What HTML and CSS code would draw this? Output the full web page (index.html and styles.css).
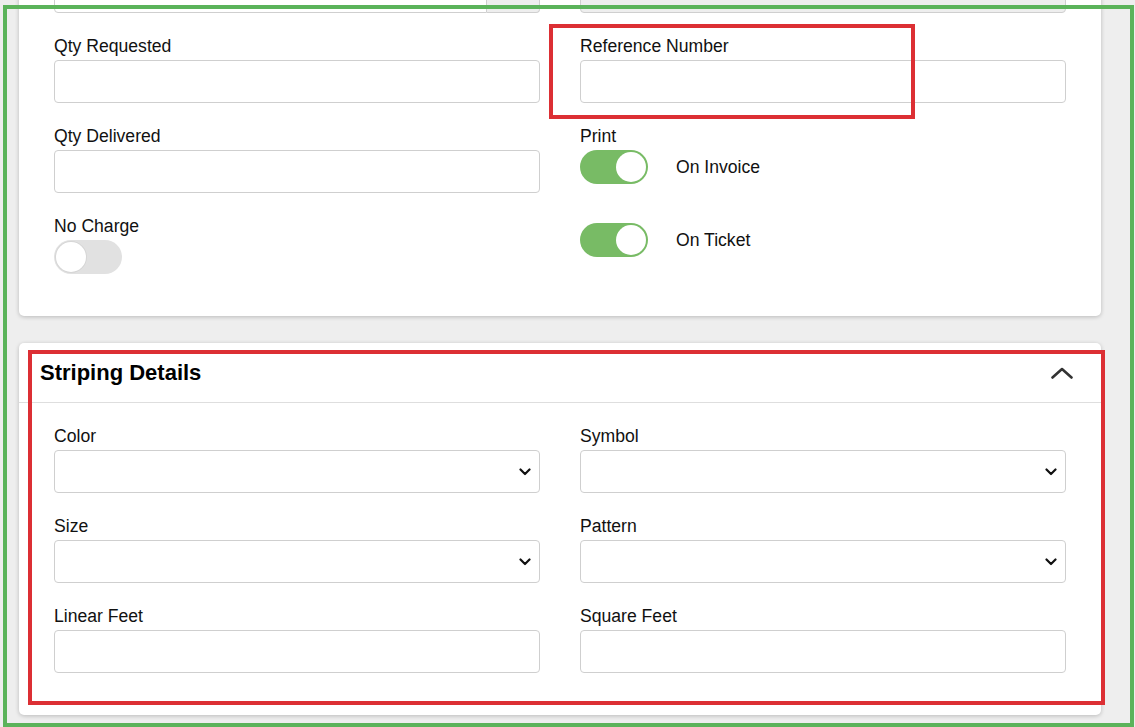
FILE: index.html
```html
<!doctype html>
<html lang="en">
<head>

<meta charset="utf-8">
<meta name="viewport" content="width=device-width, initial-scale=1">

<title>Job Line Details</title>

<link rel="stylesheet" href="styles.css">

</head>
<body>

<div class="page">
	<section class="card card--clipped">
		<div class="form-cols">
			<div class="col">
				<div class="field">
					<div class="input-group">
						<input type="text" class="input">
						<span class="addon"></span>
					</div>
				</div>
				<div class="field">
					<label for="qty-requested">Qty Requested</label>
					<input type="number" class="input" id="qty-requested">
				</div>
				<div class="field">
					<label for="qty-delivered">Qty Delivered</label>
					<input type="number" class="input" id="qty-delivered">
				</div>
				<div class="field">
					<label>No Charge</label>
					<span class="switch"></span>
				</div>
			</div>

			<div class="col">
				<div class="field">
					<input type="text" class="input" disabled>
				</div>
				<div class="field">
					<label for="ref-number">Reference Number</label>
					<input type="text" class="input" id="ref-number">
				</div>
				<div class="field">
					<label>Print</label>
					<div class="switch-row">
						<span class="switch switch--on"></span>
						<span class="switch-text">On Invoice</span>
					</div>
					<div class="switch-row switch-row--next">
						<span class="switch switch--on"></span>
						<span class="switch-text">On Ticket</span>
					</div>
				</div>
			</div>
		</div>
	</section>

	<section class="card card--section">
		<header class="card-head">
			<h2>Striping Details</h2>
			<svg class="collapse-icon" width="22" height="12" viewBox="0 0 22 12" aria-hidden="true">
				<path d="M1.5 10.5 L11 2 L20.5 10.5" fill="none" stroke="#333" stroke-width="2.6" stroke-linecap="round" stroke-linejoin="round"/>
			</svg>
		</header>

		<div class="card-body form-cols">
			<div class="col">
				<div class="field">
					<label for="stripe-color">Color</label>
					<div class="select-wrap">
						<select class="input select" id="stripe-color"><option></option></select>
						<svg class="select-arrow" width="12" height="8" viewBox="0 0 12 8" aria-hidden="true"><path d="M1.5 1.5 L6 6 L10.5 1.5" fill="none" stroke="#111" stroke-width="2.2" stroke-linecap="round" stroke-linejoin="round"/></svg>
					</div>
				</div>
				<div class="field">
					<label for="stripe-size">Size</label>
					<div class="select-wrap">
						<select class="input select" id="stripe-size"><option></option></select>
						<svg class="select-arrow" width="12" height="8" viewBox="0 0 12 8" aria-hidden="true"><path d="M1.5 1.5 L6 6 L10.5 1.5" fill="none" stroke="#111" stroke-width="2.2" stroke-linecap="round" stroke-linejoin="round"/></svg>
					</div>
				</div>
				<div class="field">
					<label for="linear-feet">Linear Feet</label>
					<input type="number" class="input" id="linear-feet">
				</div>
			</div>

			<div class="col">
				<div class="field">
					<label for="stripe-symbol">Symbol</label>
					<div class="select-wrap">
						<select class="input select" id="stripe-symbol"><option></option></select>
						<svg class="select-arrow" width="12" height="8" viewBox="0 0 12 8" aria-hidden="true"><path d="M1.5 1.5 L6 6 L10.5 1.5" fill="none" stroke="#111" stroke-width="2.2" stroke-linecap="round" stroke-linejoin="round"/></svg>
					</div>
				</div>
				<div class="field">
					<label for="stripe-pattern">Pattern</label>
					<div class="select-wrap">
						<select class="input select" id="stripe-pattern"><option></option></select>
						<svg class="select-arrow" width="12" height="8" viewBox="0 0 12 8" aria-hidden="true"><path d="M1.5 1.5 L6 6 L10.5 1.5" fill="none" stroke="#111" stroke-width="2.2" stroke-linecap="round" stroke-linejoin="round"/></svg>
					</div>
				</div>
				<div class="field">
					<label for="square-feet">Square Feet</label>
					<input type="number" class="input" id="square-feet">
				</div>
			</div>
		</div>
	</section>
</div>

<!-- review markers drawn over the form -->
<div class="mark mark--green"></div>
<div class="mark mark--red mark--ref"></div>
<div class="mark mark--red mark--striping"></div>

</body>
</html>
```

FILE: styles.css
```css
html,
body {
	margin: 0;
	padding: 0;
	height: 100%;
	overflow: hidden;
}

body {
	position: relative;
	background: #eeeeee;
	font-family: 'Liberation Sans', Arial, sans-serif;
	font-size: 1.1rem;
	color: #111;
}

.page {
	padding: 0 34px 0 19px;
}

.card {
	background: #fff;
	border-radius: 5px;
	box-shadow: 0 1px 4px rgba(0, 0, 0, 0.22);
}

.card--clipped {
	margin-top: -50px;
	padding: 20px 35px 19px;
}

.card--section {
	margin-top: 27px;
}

.card-head {
	display: flex;
	align-items: center;
	justify-content: space-between;
	height: 59px;
	padding: 0 28px 0 21px;
	border-bottom: 1px solid #dedede;
}

.card-head h2 {
	margin: 0;
	font-size: 1.375rem;
	font-weight: 700;
	color: #000;
}

.collapse-icon {
	display: block;
	margin-top: 1px;
}

.card-body {
	padding: 23px 35px 19px;
}

.form-cols {
	display: grid;
	grid-template-columns: 1fr 1fr;
	column-gap: 40px;
}

.col {
	display: flex;
	flex-direction: column;
}

.field {
	margin-bottom: 23px;
}

label {
	display: block;
	height: 20px;
	line-height: 20px;
	margin-bottom: 4px;
}

.input {
	display: block;
	box-sizing: border-box;
	width: 100%;
	height: 43px;
	margin: 0;
	padding: 0 12px;
	border: 1px solid #cfcfcf;
	border-radius: 4px;
	background: #fff;
	font: inherit;
}

.input:disabled {
	background: #eeeeee;
}

.input-group {
	display: flex;
}

.input-group .input {
	flex: 1 1 auto;
	border-radius: 4px 0 0 4px;
}

.addon {
	flex: 0 0 53px;
	box-sizing: border-box;
	height: 43px;
	border: 1px solid #cfcfcf;
	border-left: 0;
	border-radius: 0 4px 4px 0;
	background: #eeeeee;
}

.select-wrap {
	position: relative;
}

.select {
	appearance: none;
	-webkit-appearance: none;
}

.select-arrow {
	position: absolute;
	top: 18px;
	right: 9px;
	pointer-events: none;
}

.switch {
	display: block;
	position: relative;
	box-sizing: border-box;
	width: 68px;
	height: 34px;
	border-radius: 17px;
	background: #e1e1e1;
}
.switch::after {
	content: '';
	position: absolute;
	top: 2px;
	left: 2px;
	width: 30px;
	height: 30px;
	border-radius: 50%;
	background: #fff;
	box-shadow: 0 0 0 1px rgba(0, 0, 0, 0.05);
}

.switch--on {
	background: #78bb65;
}
.switch--on::after {
	left: 36px;
	box-shadow: none;
}

.switch-row {
	display: flex;
	align-items: center;
	gap: 28px;
}

.switch-row--next {
	margin-top: 39px;
}

.mark {
	position: absolute;
	box-sizing: border-box;
	pointer-events: none;
}

.mark--green {
	left: 3px;
	top: 5px;
	width: 1131px;
	height: 722px;
	border: 4px solid #5bb35a;
}

.mark--red {
	border: 4px solid #dc2f34;
}

.mark--ref {
	left: 549px;
	top: 24px;
	width: 366px;
	height: 95px;
}

.mark--striping {
	left: 28px;
	top: 350px;
	width: 1077px;
	height: 355px;
}
```
